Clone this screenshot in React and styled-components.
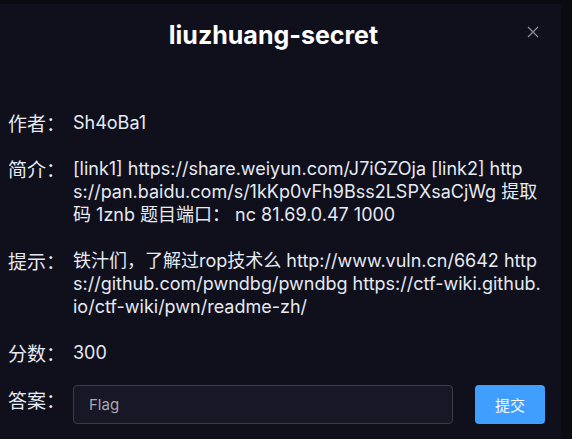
import React from "react";
import styled, { createGlobalStyle } from "styled-components";

const GlobalStyle = createGlobalStyle`
  html, body {
    margin: 0;
    padding: 0;
    background: #0b0b12;
  }
  body {
    font-family: Inter, "Noto Sans CJK SC", sans-serif;
  }
`;

const Page = styled.div`
  width: 572px;
  height: 439px;
  overflow: hidden;
  padding-top: 4px;
  box-sizing: border-box;
`;

const Dialog = styled.div`
  width: 561px;
  height: 460px;
  background: #100f1c;
  position: relative;
  box-sizing: border-box;
  padding: 0 8px;
`;

const Header = styled.div`
  height: 62px;
  display: flex;
  align-items: center;
  justify-content: center;
  padding-right: 14px;
`;

const Title = styled.h2`
  margin: 0;
  color: #ffffff;
  font-size: 25px;
  font-weight: 700;
`;

const Close = styled.button`
  position: absolute;
  top: 16px;
  right: 16px;
  width: 24px;
  height: 24px;
  padding: 0;
  border: none;
  background: transparent;
  display: flex;
  align-items: center;
  justify-content: center;
  cursor: pointer;
`;

const Body = styled.div`
  padding-top: 45px;
  display: flex;
  flex-direction: column;
  gap: 23px;
`;

const Row = styled.div`
  display: flex;
  align-items: flex-start;
  margin-top: ${(p) => p.$shift || 0}px;
  color: #e5eaf3;
  font-size: 18px;
  line-height: 23px;
`;

const Label = styled.div`
  width: 65px;
  flex-shrink: 0;
  font-family: "Noto Sans CJK SC", sans-serif;
  font-size: 19px;
  padding-top: ${(p) => p.$top || 0}px;
`;

const Value = styled.div`
  width: 468px;
  word-break: break-all;
`;

const Input = styled.input`
  width: 380px;
  height: 39px;
  box-sizing: border-box;
  background: #181726;
  border: 1px solid #3b3a47;
  border-radius: 4px;
  padding: 0 15px;
  color: #e5eaf3;
  font-family: Inter, sans-serif;
  font-size: 15px;
  outline: none;

  &::placeholder {
    color: #a8abb2;
  }
`;

const Submit = styled.button`
  margin-left: 22px;
  width: 70px;
  height: 39px;
  border: none;
  border-radius: 4px;
  background: #409eff;
  color: #ffffff;
  font-family: "Noto Sans CJK SC", sans-serif;
  font-size: 15px;
  cursor: pointer;
`;

const App = () => {
  return (
    <Page>
      <GlobalStyle />
      <Dialog>
        <Header>
          <Title>liuzhuang-secret</Title>
        </Header>
        <Close aria-label="close">
          <svg width="12" height="12" viewBox="0 0 12 12">
            <path d="M1 1L11 11M11 1L1 11" stroke="#8d9095" strokeWidth="1.2" />
          </svg>
        </Close>
        <Body>
          <Row>
            <Label>作者：</Label>
            <Value>Sh4oBa1</Value>
          </Row>
          <Row>
            <Label>简介：</Label>
            <Value>
              [link1] https://share.weiyun.com/J7iGZOja [link2] https://pan.baidu.com/s/1kKp0vFh9Bss2LSPXsaCjWg 提取码 1znb 题目端口： nc 81.69.0.47 1000
            </Value>
          </Row>
          <Row>
            <Label>提示：</Label>
            <Value>
              铁汁们，了解过rop技术么 http://www.vuln.cn/6642 https://github.com/pwndbg/pwndbg https://ctf-wiki.github.io/ctf-wiki/pwn/readme-zh/
            </Value>
          </Row>
          <Row>
            <Label>分数：</Label>
            <Value>300</Value>
          </Row>
          <Row $shift={-2}>
            <Label $top={3}>答案：</Label>
            <Input placeholder="Flag" />
            <Submit>提交</Submit>
          </Row>
        </Body>
      </Dialog>
    </Page>
  );
};

export default App;
